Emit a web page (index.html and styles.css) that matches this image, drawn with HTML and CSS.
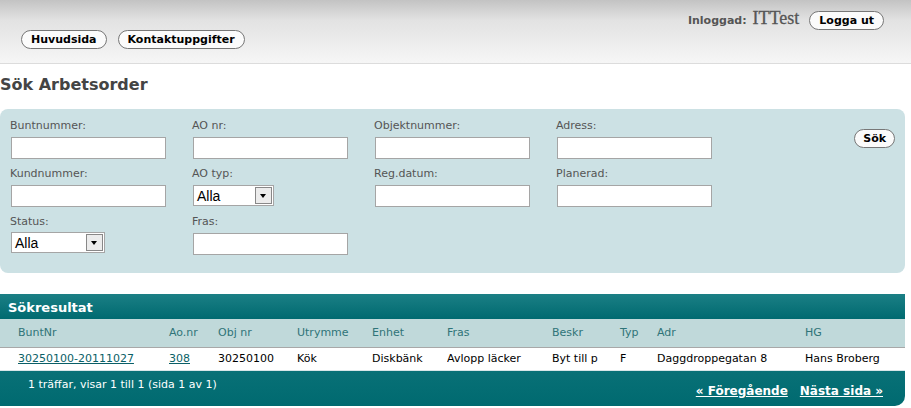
FILE: index.html
```html
<!DOCTYPE html>
<html lang="sv">
<head>
<meta charset="utf-8">
<title>Sök Arbetsorder</title>
<link rel="stylesheet" href="styles.css">
</head>
<body>
<header class="topbar">
  <nav class="mainnav">
    <button class="pill">Huvudsida</button>
    <button class="pill">Kontaktuppgifter</button>
  </nav>
  <div class="user">
    <span class="user-label">Inloggad:</span>
    <span class="user-name">ITTest</span>
    <button class="pill">Logga ut</button>
  </div>
</header>

<h1 class="title">Sök Arbetsorder</h1>

<section class="search">
  <div class="grid">
    <div class="field"><label>Buntnummer:</label><input class="txt" type="text"></div>
    <div class="field"><label>AO nr:</label><input class="txt" type="text"></div>
    <div class="field"><label>Objektnummer:</label><input class="txt" type="text"></div>
    <div class="field"><label>Adress:</label><input class="txt" type="text"></div>

    <div class="field"><label>Kundnummer:</label><input class="txt" type="text"></div>
    <div class="field"><label>AO typ:</label><div class="sel sel-ao"><span>Alla</span><i class="arrow"></i></div></div>
    <div class="field"><label>Reg.datum:</label><input class="txt" type="text"></div>
    <div class="field"><label>Planerad:</label><input class="txt" type="text"></div>

    <div class="field"><label>Status:</label><div class="sel sel-status"><span>Alla</span><i class="arrow"></i></div></div>
    <div class="field"><label>Fras:</label><input class="txt" type="text"></div>
  </div>
  <button class="pill search-btn">Sök</button>
</section>

<section class="results">
  <h2 class="results-title">Sökresultat</h2>
  <table class="rtable">
    <thead>
      <tr>
        <th class="c1">BuntNr</th><th class="c2">Ao.nr</th><th class="c3">Obj nr</th><th class="c4">Utrymme</th><th class="c5">Enhet</th><th class="c6">Fras</th><th class="c7">Beskr</th><th class="c8">Typ</th><th class="c9">Adr</th><th class="c10">HG</th>
      </tr>
    </thead>
    <tbody>
      <tr>
        <td class="c1"><a href="#">30250100-20111027</a></td><td><a href="#">308</a></td><td>30250100</td><td>Kök</td><td>Diskbänk</td><td>Avlopp läcker</td><td>Byt till p</td><td>F</td><td>Daggdroppegatan 8</td><td>Hans Broberg</td>
      </tr>
    </tbody>
  </table>
  <div class="rfoot">
    <span class="count">1 träffar, visar 1 till 1 (sida 1 av 1)</span>
    <div class="pager"><a href="#">« Föregående</a><a href="#">Nästa sida »</a></div>
  </div>
</section>
</body>
</html>
```

FILE: styles.css
```css
* { box-sizing: border-box; }
html, body { margin: 0; padding: 0; background: #fff; }
body {
  font-family: "DejaVu Sans", Verdana, sans-serif;
  font-size: 11px;
  color: #000;
  width: 911px;
}

.pill {
  font-family: "DejaVu Sans", Verdana, sans-serif;
  font-size: 11px;
  font-weight: bold;
  color: #000;
  background: #fbfbfb;
  border: 1px solid #777;
  border-radius: 10px;
  height: 19px;
  padding: 0 9px;
  line-height: 17px;
  margin: 0;
}

.topbar {
  height: 64px;
  background: linear-gradient(#c3c3c3 0px, #e2e2e2 20px, #f6f6f6 63px);
  border-bottom: 1px solid #dcdcdc;
  display: flex;
  justify-content: space-between;
}
.mainnav {
  display: flex;
  gap: 11px;
  padding: 30px 0 0 21px;
  align-items: flex-start;
}
.user {
  display: flex;
  align-items: center;
  padding: 11px 27px 0 0;
  height: 30px;
  align-self: flex-start;
}
.user-label { font-weight: bold; color: #555; font-size: 11px; margin-right: 6px; }
.user-name {
  font-family: "Liberation Serif", "Times New Roman", serif;
  font-size: 18px;
  font-weight: normal;
  color: #555;
  margin-right: 10px;
  position: relative;
  top: -2px;
  -webkit-text-stroke: 0.3px #555;
}

.title {
  font-size: 16px;
  font-weight: bold;
  color: #444;
  margin: 0;
  padding: 11px 0 0 0;
  height: 45px;
  line-height: 20px;
}

.search {
  margin: 0 6px 0 0;
  background: #cce1e4;
  border-radius: 8px;
  height: 164px;
  display: flex;
  justify-content: space-between;
  align-items: flex-start;
  padding: 10px 10px 0 10px;
}
.grid {
  display: grid;
  grid-template-columns: 182px 182px 182px 182px;
  row-gap: 8px;
}
.field { display: flex; flex-direction: column; }
.field label {
  color: #555;
  font-size: 11px;
  line-height: 14px;
  height: 18px;
}
.txt {
  width: 155px;
  height: 22px;
  margin: 0 0 0 1px;
  border: 1px solid #a5a5a5;
  background: #fff;
  padding: 0;
}
.sel {
  height: 21px;
  margin-left: 1px;
  border: 1px solid #a5a5a5;
  background: #fff;
  display: flex;
  align-items: center;
  justify-content: space-between;
  font-family: "Liberation Sans", Arial, sans-serif;
  font-size: 14px;
  color: #000;
  padding-left: 3px;
}
.sel-ao { width: 81px; }
.sel-status { width: 94px; margin-top: -1px; }
.arrow {
  width: 17px;
  height: 17px;
  margin-right: 1px;
  background: #ececec;
  border: 1px solid #888;
  position: relative;
}
.arrow::after {
  content: "";
  position: absolute;
  left: 4px;
  top: 6px;
  border-left: 3.5px solid transparent;
  border-right: 3.5px solid transparent;
  border-top: 4px solid #000;
}
.search-btn {
  margin-top: 10px;
  padding: 0 8px;
}

.results {
  margin: 21px 6px 0 0;
  background: linear-gradient(#1b7f85, #006a70);
  border-radius: 0 0 10px 0;
}
.results-title {
  margin: 0;
  font-size: 13px;
  font-weight: bold;
  color: #fff;
  height: 25px;
  line-height: 27px;
  padding-left: 8px;
  background: linear-gradient(#1b7f85, #006a70);
}
.rtable {
  width: 100%;
  border-collapse: collapse;
  table-layout: fixed;
}
.rtable th {
  background: #c0d9da;
  color: #2f7478;
  font-weight: normal;
  text-align: left;
  height: 28px;
  padding: 0;
  font-size: 11px;
  border-bottom: 1px solid #a8a8a8;
}
.rtable td {
  background: #fff;
  height: 23px;
  padding: 0;
  font-size: 11px;
  color: #000;
  white-space: nowrap;
  overflow: hidden;
}
.rtable a { color: #0a5f67; text-decoration: underline; }
.rtable .c1 { width: 169px; padding-left: 18px; }
.c2 { width: 49px; }
.c3 { width: 79px; }
.c4 { width: 75px; }
.c5 { width: 75px; }
.c6 { width: 105px; }
.c7 { width: 68px; }
.c8 { width: 37px; }
.c9 { width: 148px; }

.rfoot {
  height: 36px;
  display: flex;
  justify-content: space-between;
  color: #fff;
  border-top: 1px solid #d7e6e8;
  border-radius: 0 0 10px 0;
}
.count { padding: 7px 0 0 28px; }
.pager {
  display: flex;
  gap: 12px;
  padding: 13px 22px 0 0;
}
.pager a {
  color: #fff;
  font-size: 12px;
  font-weight: bold;
  text-decoration: underline;
}
```
